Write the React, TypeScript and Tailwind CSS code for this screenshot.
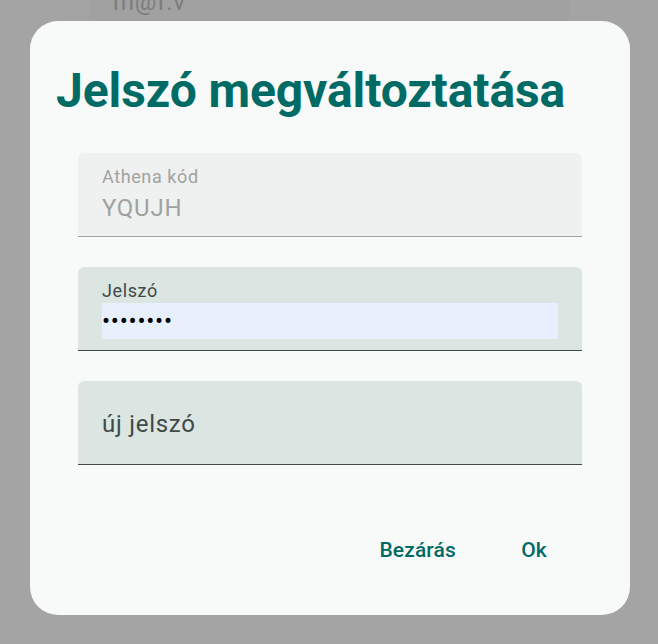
import React from "react";

const font = { fontFamily: "Roboto, 'Noto Sans', sans-serif" };

export default function App() {
  return (
    <div
      className="relative w-[658px] h-[644px] overflow-hidden bg-[#a3a4a3]"
      style={font}
    >
      {/* page behind the overlay */}
      <div className="ml-[89px] w-[480px] h-[200px] bg-[#a0a1a0] pl-[24px]">
        <div className="-mt-[12px] text-[24px] leading-[28px] tracking-[0.75px] text-[#7c7d7c]">
          m@f.v
        </div>
      </div>

      {/* dialog */}
      <div className="absolute left-[30px] top-[21px] w-[600px] h-[594px] rounded-[28px] bg-[#f8faf9] flex flex-col">
        <h1 className="pt-[42px] pl-[26px] text-[48px] leading-[56px] font-bold tracking-[-0.1px] text-[#006a65]">
          Jelszó megváltoztatása
        </h1>

        <div className="mt-[34px] px-[48px] flex flex-col gap-[30px]">
          {/* disabled field */}
          <div className="h-[84px] rounded-t-[6px] bg-[#eff1f0] border-b border-[#a1a3a2] px-[24px] pt-[13px]">
            <div className="text-[18px] leading-[22px] tracking-[0.6px] text-[#a0a2a1]">
              Athena kód
            </div>
            <div className="mt-[4px] text-[24px] leading-[32px] tracking-[0.75px] text-[#a0a2a1]">
              YQUJH
            </div>
          </div>

          {/* password field */}
          <div className="h-[84px] rounded-t-[6px] bg-[#dbe5e2] border-b border-[#3f4948] px-[24px] pt-[13px]">
            <div className="text-[18px] leading-[22px] tracking-[0.6px] text-[#3f4948]">
              Jelszó
            </div>
            <input
              type="password"
              readOnly
              defaultValue="12345678"
              className="mt-[1px] block w-full h-[36px] bg-[#e8f0fe] text-[24px] tracking-[0.75px] text-black outline-none"
              style={font}
            />
          </div>

          {/* new password field */}
          <div className="h-[84px] rounded-t-[6px] bg-[#dbe5e2] border-b border-[#3f4948] px-[24px] pt-[2px] flex items-center">
            <input
              type="password"
              placeholder="új jelszó"
              className="block w-full bg-transparent text-[24px] tracking-[0.75px] text-[#3f4948] placeholder:text-[#3f4948] outline-none"
              style={font}
            />
          </div>
        </div>

        <div className="mt-[56px] px-[48px] flex justify-end gap-[12px]">
          <button className="h-[60px] min-w-[96px] px-[18px] rounded-full text-[21px] font-medium tracking-[0.15px] text-[#006a65]">
            Bezárás
          </button>
          <button className="h-[60px] min-w-[96px] px-[18px] rounded-full text-[21px] font-medium tracking-[0.15px] text-[#006a65]">
            Ok
          </button>
        </div>
      </div>
    </div>
  );
}
